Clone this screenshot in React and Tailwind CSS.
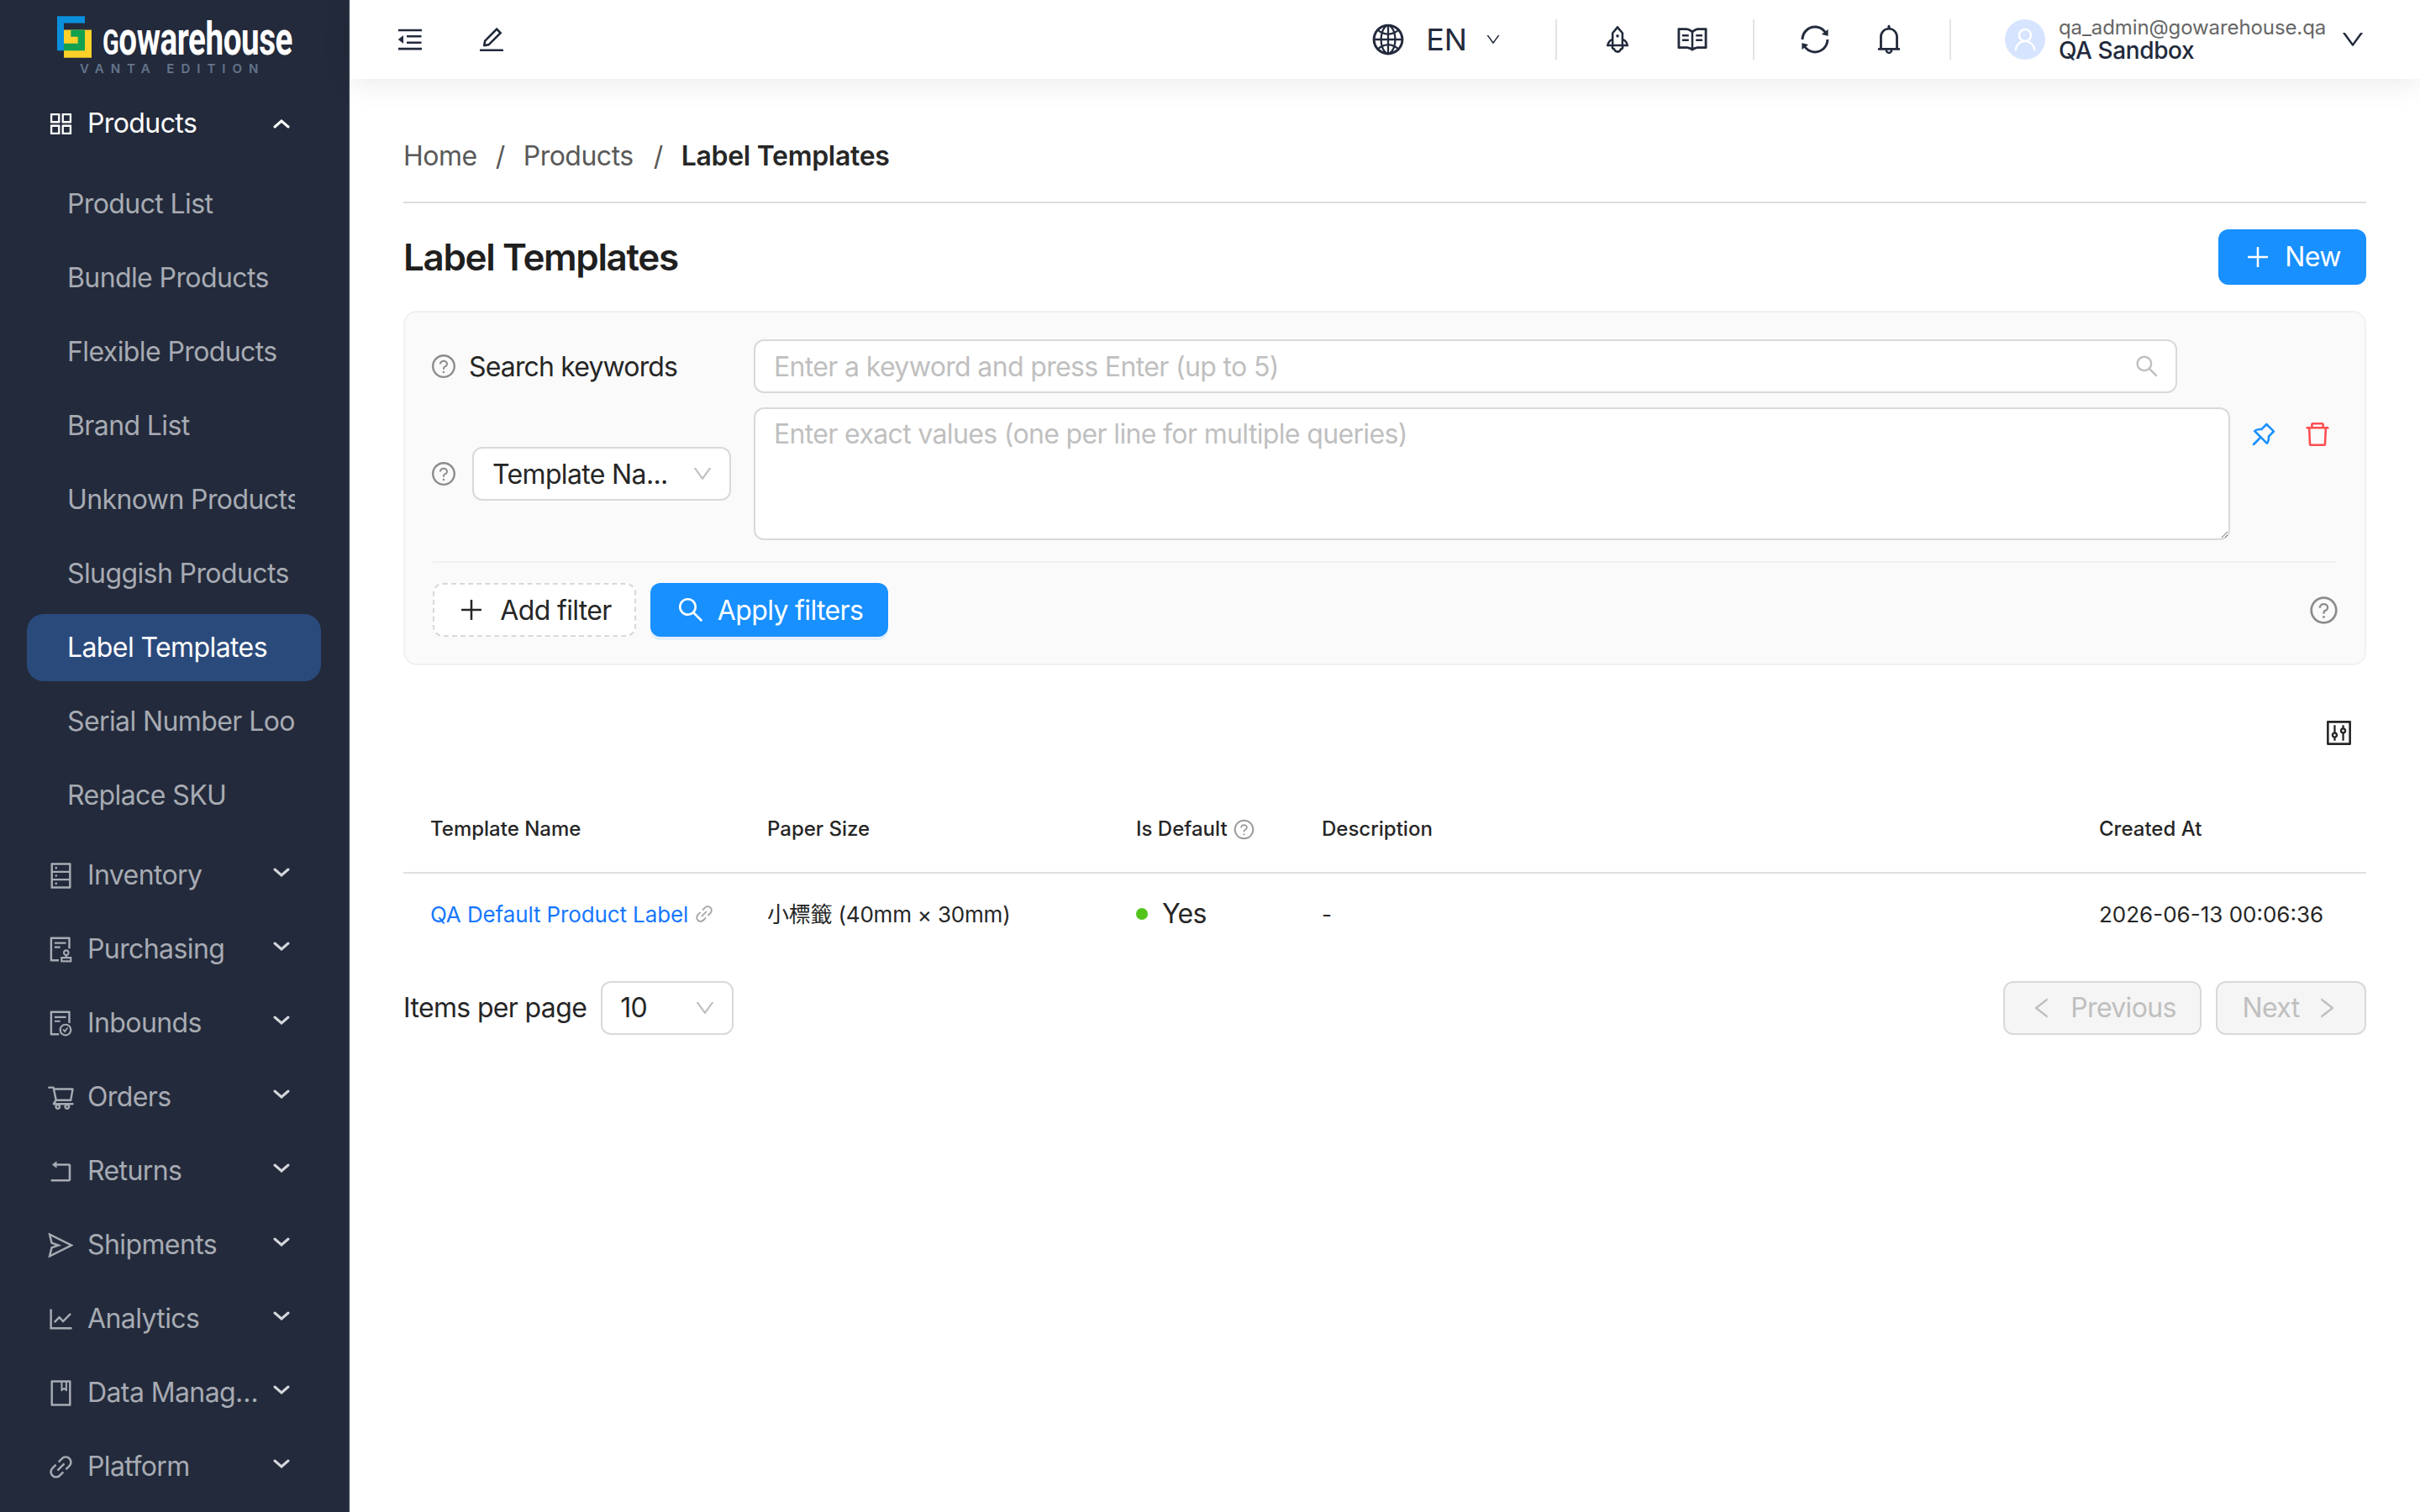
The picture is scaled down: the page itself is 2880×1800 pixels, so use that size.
import {
  AiOutlineAppstore, AiOutlineDatabase, AiOutlineAudit, AiOutlineFileDone, AiOutlineShoppingCart,
  AiOutlineRollback, AiOutlineSend, AiOutlineLineChart, AiOutlineBook, AiOutlineLink,
  AiOutlineMenuFold, AiOutlineEdit, AiOutlineGlobal, AiOutlineDown, AiOutlineRocket, AiOutlineRead,
  AiOutlineSync, AiOutlineBell, AiOutlineUser, AiOutlinePlus, AiOutlineSearch, AiOutlineQuestionCircle,
  AiOutlinePushpin, AiOutlineDelete, AiOutlineControl, AiOutlineLeft, AiOutlineRight,
} from 'react-icons/ai';

const SUB_ITEMS = [
  'Product List', 'Bundle Products', 'Flexible Products', 'Brand List', 'Unknown Products',
  'Sluggish Products', 'Label Templates', 'Serial Number Lookup', 'Replace SKU',
];

const TOP_ITEMS = [
  { label: 'Inventory', icon: AiOutlineDatabase },
  { label: 'Purchasing', icon: AiOutlineAudit },
  { label: 'Inbounds', icon: AiOutlineFileDone },
  { label: 'Orders', icon: AiOutlineShoppingCart },
  { label: 'Returns', icon: AiOutlineRollback },
  { label: 'Shipments', icon: AiOutlineSend },
  { label: 'Analytics', icon: AiOutlineLineChart },
  { label: 'Data Management', icon: AiOutlineBook },
  { label: 'Platform', icon: AiOutlineLink },
];

function MenuArrow({ up }) {
  return (
    <svg width="20" height="12" viewBox="0 0 20 12" className="shrink-0">
      <path d={up ? 'M2 10 L10 3 L18 10' : 'M2 2 L10 9 L18 2'} fill="none" stroke="currentColor" strokeWidth="3" strokeLinecap="round" />
    </svg>
  );
}

function Logo() {
  return (
    <div className="h-[107px] shrink-0 relative">
      <svg width="41" height="50" viewBox="0 0 123 149" className="absolute left-[68px] top-[19px]">
        <path d="M24 49H123V149H24Z" fill="#fdd02a" />
        <path d="M49 49H99V123H24V98H74V74H49Z" fill="#12a150" />
        <path d="M0 0H99V25H24V123H0Z" fill="#0a8fdc" />
      </svg>
      <svg width="240" height="50" className="absolute left-[120px] top-[19px]">
        <text x="2" y="46" fill="#ffffff" fontFamily="Roboto, sans-serif" fontWeight="700" fontSize="56" textLength="226" lengthAdjust="spacingAndGlyphs">
          <tspan fontSize="42">G</tspan>owarehouse
        </text>
      </svg>
      <div className="absolute left-[95px] top-[73px] w-[230px] text-[15px] leading-[18px] font-semibold tracking-[8px] text-[#64748b] whitespace-nowrap">VANTA EDITION</div>
    </div>
  );
}

function Sidebar() {
  return (
    <aside className="w-[416px] h-full shrink-0 bg-[#232a3b] border-r-2 border-[#2d3548] overflow-hidden flex flex-col tracking-[-0.6px]">
      <Logo />
      <ul className="flex flex-col gap-2 pl-[32px] pr-[32px]">
        <li>
          <div className="h-[80px] flex items-center pl-[23px] pr-[37px] text-white">
            <AiOutlineAppstore className="text-[35px] shrink-0" />
            <span className="ml-[14px] flex-1 text-[32px]">Products</span>
            <MenuArrow up />
          </div>
          <ul className="flex flex-col gap-2 pt-[16px] pb-[7px]">
            {SUB_ITEMS.map((item) => (
              <li
                key={item}
                className={`h-[80px] flex items-center pl-[48px] rounded-[20px] text-[32px] ${
                  item === 'Label Templates' ? 'bg-[#2b4a7c] text-white' : 'text-[#a7abb3]'
                }`}
              >
                <span className="w-[271px] overflow-hidden whitespace-nowrap">{item}</span>
              </li>
            ))}
          </ul>
        </li>
        {TOP_ITEMS.map(({ label, icon: Icon }) => (
          <li key={label} className="h-[80px] flex items-center pl-[23px] pr-[37px] text-[#a7abb3]">
            <Icon className="text-[35px] shrink-0" />
            <span className="ml-[14px] w-[204px] truncate text-[32px]">{label}</span>
            <span className="flex-1" />
            <span className="text-[#d5d7dc] -mt-[6px]"><MenuArrow /></span>
          </li>
        ))}
      </ul>
    </aside>
  );
}

function Divider() {
  return <div className="w-[2px] h-[48px] bg-[#e3e3e3] shrink-0" />;
}

function Header() {
  return (
    <header className="h-[94px] shrink-0 bg-white flex items-center relative z-10 shadow-[0_4px_36px_rgba(0,0,0,0.09)] text-[#222a3c]">
      <AiOutlineMenuFold className="text-[36px] ml-[54px]" />
      <AiOutlineEdit className="text-[36px] ml-[61px]" />
      <div className="flex-1" />
      <AiOutlineGlobal className="text-[42px]" />
      <span className="ml-[24px] text-[36px]">EN</span>
      <AiOutlineDown className="text-[20px] ml-[21px]" />
      <div className="ml-[64px]"><Divider /></div>
      <AiOutlineRocket className="text-[38px] ml-[53px]" />
      <AiOutlineRead className="text-[40px] ml-[50px]" />
      <div className="ml-[52px]"><Divider /></div>
      <AiOutlineSync className="text-[40px] ml-[52px]" />
      <AiOutlineBell className="text-[40px] ml-[48px]" />
      <div className="ml-[52px]"><Divider /></div>
      <div className="ml-[64px] w-[48px] h-[48px] rounded-full bg-[#d6e4ff] flex items-center justify-center text-white shrink-0">
        <AiOutlineUser className="text-[34px]" />
      </div>
      <div className="ml-[16px] flex flex-col w-[334px] -mt-[1px]">
        <span className="text-[24px] leading-[26px] text-[#666666] tracking-[-0.1px]">qa_admin@gowarehouse.qa</span>
        <span className="text-[28px] leading-[28px] font-medium tracking-[-0.4px]">QA Sandbox</span>
      </div>
      <AiOutlineDown className="text-[32px] mr-[64px]" />
    </header>
  );
}

function Breadcrumb() {
  return (
    <nav className="pt-[68px] pb-[30px] border-b-2 border-[#dedede] flex items-center gap-[22px] text-[32px] leading-[48px] text-[#595959] tracking-[-0.5px]">
      <span>Home</span>
      <span>/</span>
      <span>Products</span>
      <span className="ml-[2px]">/</span>
      <span className="font-semibold text-[#262626] tracking-[-0.3px]">Label Templates</span>
    </nav>
  );
}

function HelpIcon({ className }) {
  return <AiOutlineQuestionCircle className={`text-[#8c8c8c] shrink-0 ${className}`} />;
}

function FilterCard() {
  return (
    <section className="mt-[31px] border-2 border-[#f0f0f0] rounded-[16px] bg-[#fafafa] pt-[32px] pb-[32px] px-[33px] text-[32px] text-[#262626] tracking-[-0.65px]">
      <div className="flex items-center h-[64px]">
        <div className="w-[382px] flex items-center shrink-0">
          <HelpIcon className="text-[32px] -ml-[3px]" />
          <span className="ml-[14px] pt-[2px] tracking-[-0.85px]">Search keywords</span>
        </div>
        <div className="w-[1694px] h-[64px] border-2 border-[#d9d9d9] rounded-[12px] bg-white flex items-center pl-[22px] pr-[18px]">
          <input
            className="flex-1 min-w-0 bg-transparent outline-none pt-[2px] placeholder:text-[#bfbfbf]"
            placeholder="Enter a keyword and press Enter (up to 5)"
          />
          <AiOutlineSearch className="text-[32px] text-[#bfbfbf]" />
        </div>
      </div>
      <div className="flex mt-[17px]">
        <div className="w-[382px] h-[158px] flex items-center shrink-0">
          <HelpIcon className="text-[32px] -ml-[3px]" />
          <div className="ml-[18px] w-[308px] h-[64px] border-2 border-[#d9d9d9] rounded-[12px] bg-white flex items-center pl-[22px] pr-[18px]">
            <span className="flex-1 pt-[1px]">Template Na...</span>
            <AiOutlineDown className="text-[28px] text-[#bfbfbf]" />
          </div>
        </div>
        <textarea
          className="w-[1757px] h-[158px] border-2 border-[#d9d9d9] rounded-[12px] bg-white px-[22px] py-[6px] leading-[48px] outline-none placeholder:text-[#bfbfbf]"
          placeholder="Enter exact values (one per line for multiple queries)"
        />
        <AiOutlinePushpin className="text-[36px] text-[#1890ff] ml-[22px] mt-[14px] shrink-0" />
        <AiOutlineDelete className="text-[36px] text-[#ff4d4f] ml-[28px] mt-[14px] shrink-0" />
      </div>
      <div className="mt-[25px] border-t-2 border-[#f0f0f0] pt-[24px] flex items-center">
        <button className="w-[242px] h-[64px] border-2 border-dashed border-[#d9d9d9] rounded-[12px] bg-white flex items-center justify-center gap-[17px]">
          <AiOutlinePlus className="text-[34px]" />
          <span className="pt-[1px]">Add filter</span>
        </button>
        <button className="ml-[17px] w-[283px] h-[64px] rounded-[12px] bg-[#1890ff] text-white flex items-center justify-center gap-[14px] shadow-[0_4px_0_rgba(24,144,255,0.1)]">
          <AiOutlineSearch className="text-[36px]" />
          <span className="pt-[1px]">Apply filters</span>
        </button>
        <div className="flex-1" />
        <HelpIcon className="text-[37px] -mr-[3px]" />
      </div>
    </section>
  );
}

function LabelTable() {
  return (
    <>
      <div className="mt-[62px] flex justify-end pr-[14px]">
        <AiOutlineControl className="text-[37px] text-[#262626]" />
      </div>
      <table className="mt-[42px] w-full table-fixed text-[#262626]">
        <colgroup>
          <col className="w-[401px]" />
          <col className="w-[439px]" />
          <col className="w-[221px]" />
          <col className="w-[925px]" />
          <col className="w-[350px]" />
        </colgroup>
        <thead>
          <tr className="h-[106px] text-[24px] font-medium text-left border-b-2 border-[#e0e0e0]">
            <th className="pl-[32px] pt-[3px] font-medium">Template Name</th>
            <th className="pl-[32px] pt-[3px] font-medium">Paper Size</th>
            <th className="pl-[32px] pt-[3px] font-medium">
              <span className="flex items-center gap-[6px]">
                Is Default
                <AiOutlineQuestionCircle className="text-[27px] text-[#9a9a9a]" />
              </span>
            </th>
            <th className="pl-[32px] pt-[3px] font-medium">Description</th>
            <th className="pl-[32px] pt-[3px] font-medium">Created At</th>
          </tr>
        </thead>
        <tbody>
          <tr className="h-[96px] text-[26px]">
            <td className="pl-[32px] pt-[1px]">
              <span className="flex items-center gap-[6px] text-[#1677ff] whitespace-nowrap tracking-[-0.12px]">
                QA Default Product Label
                <AiOutlineLink className="text-[26px] text-[#a6a6a6]" />
              </span>
            </td>
            <td className="pl-[32px] pt-[1px] whitespace-nowrap tracking-[-0.2px]">小標籤 (40mm × 30mm)</td>
            <td className="pl-[32px] pt-[1px]">
              <span className="flex items-center">
                <span className="w-[14px] h-[14px] rounded-full bg-[#52c41a]" />
                <span className="ml-[17px] text-[32px] tracking-[-0.65px]">Yes</span>
              </span>
            </td>
            <td className="pl-[32px] pt-[1px]">-</td>
            <td className="pl-[32px] pt-[1px] whitespace-nowrap">2026-06-13 00:06:36</td>
          </tr>
        </tbody>
      </table>
    </>
  );
}

function Pagination() {
  return (
    <div className="mt-[33px] flex items-center text-[32px] tracking-[-0.65px]">
      <span className="text-[#262626]">Items per page</span>
      <div className="ml-[17px] w-[158px] h-[64px] border-2 border-[#d9d9d9] rounded-[12px] bg-white flex items-center pl-[21px] pr-[18px] text-[#262626]">
        <span className="flex-1">10</span>
        <AiOutlineDown className="text-[28px] text-[#bfbfbf]" />
      </div>
      <div className="flex-1" />
      <button className="w-[236px] h-[64px] border-2 border-[#d9d9d9] rounded-[12px] bg-[#f5f5f5] text-[#bfbfbf] flex items-center justify-center gap-[18px]">
        <AiOutlineLeft className="text-[32px]" />
        <span>Previous</span>
      </button>
      <button className="ml-[17px] w-[179px] h-[64px] border-2 border-[#d9d9d9] rounded-[12px] bg-[#f5f5f5] text-[#bfbfbf] flex items-center justify-center gap-[16px]">
        <span>Next</span>
        <AiOutlineRight className="text-[32px]" />
      </button>
    </div>
  );
}

export default function App() {
  return (
    <div className="w-full h-screen flex overflow-hidden bg-white font-['Inter','Noto_Sans_CJK_TC',sans-serif]">
      <Sidebar />
      <div className="flex-1 min-w-0 flex flex-col">
        <Header />
        <main className="flex-1 px-[64px]">
          <Breadcrumb />
          <div className="mt-[31px] flex items-center justify-between">
            <h1 className="text-[44px] leading-[66px] font-semibold text-[#1f1f1f] tracking-[-1.35px]">Label Templates</h1>
            <button className="w-[176px] h-[66px] rounded-[12px] bg-[#1890ff] text-white text-[32px] tracking-[-0.65px] flex items-center justify-center gap-[15px]">
              <AiOutlinePlus className="text-[34px]" />
              New
            </button>
          </div>
          <FilterCard />
          <LabelTable />
          <Pagination />
        </main>
      </div>
    </div>
  );
}
